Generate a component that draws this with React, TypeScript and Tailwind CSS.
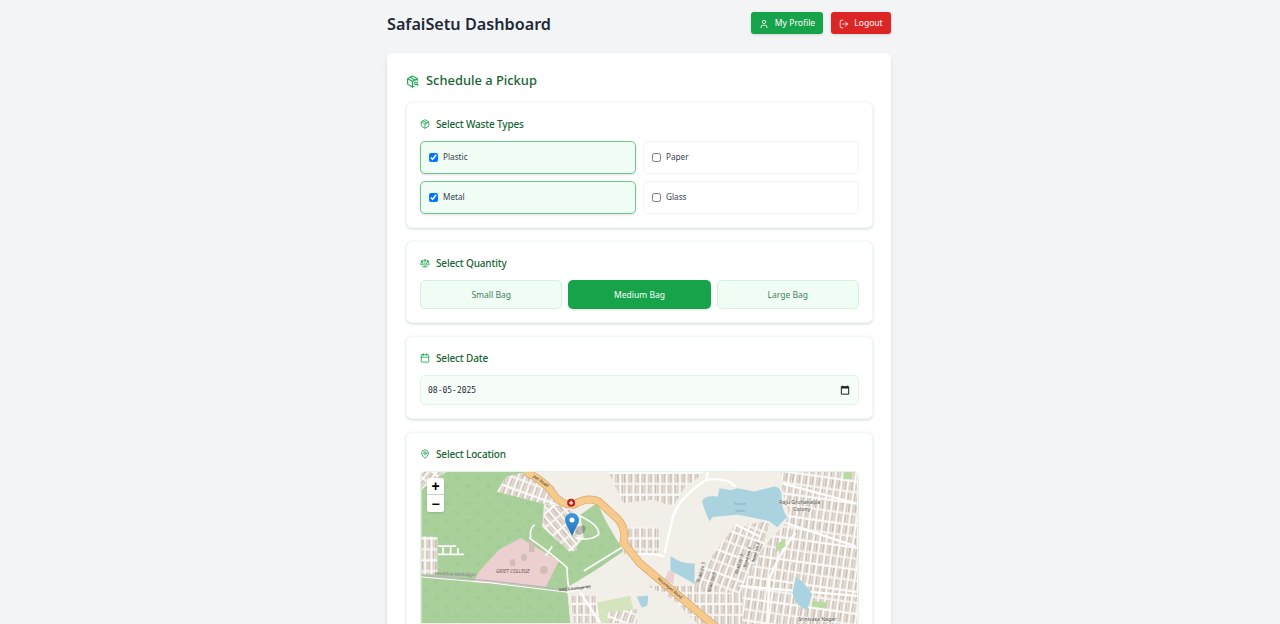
import { Calendar, LogOut, MapPin, Package, PackageSearch, Scale, User } from "lucide-react";

const wasteTypes = [
  { name: "Plastic", checked: true },
  { name: "Paper", checked: false },
  { name: "Metal", checked: true },
  { name: "Glass", checked: false },
];

const bags = [
  { name: "Small Bag", active: false },
  { name: "Medium Bag", active: true },
  { name: "Large Bag", active: false },
];

// one hatch per street direction; white lanes, tan houses
const hatches = [
  { id: "h0", rot: 0 },
  { id: "h8", rot: 8 },
  { id: "h20", rot: 20 },
  { id: "h40", rot: 40 },
  { id: "h-40", rot: -40 },
];

function Hatches() {
  return (
    <defs>
      {hatches.map((h) => (
        <pattern key={h.id} id={h.id} width={20} height={66} patternUnits="userSpaceOnUse" patternTransform={`rotate(${h.rot})`}>
          <rect width={20} height={66} fill="#f4f1ec" />
          <rect x={4} y={3} width={5} height={26} fill="#cbbfb5" />
          <rect x={11} y={3} width={5} height={26} fill="#d6ccc3" />
          <rect x={4} y={36} width={5} height={26} fill="#d6ccc3" />
          <rect x={11} y={36} width={5} height={26} fill="#c6b9ae" />
          <rect x={0} y={0} width={2.5} height={66} fill="#ffffff" />
          <rect x={0} y={31} width={20} height={3.5} fill="#ffffff" />
        </pattern>
      ))}
      <pattern id="trees" width={62} height={52} patternUnits="userSpaceOnUse">
        <path d="M10 14 q-4 -6 -2 -9 M14 16 v-12 M18 14 q4 -6 2 -9" stroke="#98c388" strokeWidth={2} fill="none" />
        <path d="M42 40 q-4 -6 -2 -9 M46 42 v-12 M50 40 q4 -6 2 -9" stroke="#98c388" strokeWidth={2} fill="none" />
      </pattern>
    </defs>
  );
}

const FOREST =
  "M30 118 L100 96 L345 96 L290 115 L258 155 L400 190 L395 262 L480 338 L520 295 L510 225 L560 190 L590 250 L640 335 L560 390 L470 445 L480 552 L30 552 Z";

function MapArt() {
  return (
    <svg viewBox="30 96 1317 900" className="block h-full w-full" fontFamily="'Noto Sans', sans-serif">
      <Hatches />
      <rect x={30} y={96} width={1317} height={900} fill="#f2efe9" />

      <path d={FOREST} fill="#a9d09a" />
      <path d={FOREST} fill="url(#trees)" />
      <path d="M30 96 L105 96 L60 125 L30 150 Z" fill="url(#h40)" />
      <path d="M30 290 L78 292 L78 405 L30 405 Z" fill="url(#h0)" />

      {/* college */}
      <path d="M205 395 L265 330 L330 295 L445 365 L405 445 L270 432 L185 430 Z" fill="#eccfcf" />
      <ellipse cx={305} cy={370} rx={9} ry={11} fill="#d3bdb7" />
      <ellipse cx={340} cy={354} rx={9} ry={11} fill="#d3bdb7" />
      <circle cx={400} cy={392} r={12} fill="#d3bdb7" />
      <rect x={355} y={306} width={16} height={32} fill="#d3bdb7" />
      <text x={255} y={401} fontSize={15} fontStyle="italic" fill="#6b5a55">GRIET COLLEGE</text>

      <path d="M80 320 H135 M95 320 V345 M118 320 V345 M140 325 V345 M80 345 H158" stroke="#ffffff" strokeWidth={5} fill="none" />

      {/* residential blocks around the road */}
      <path d="M285 110 L345 96 L420 130 L470 190 L410 195 L258 155 Z" fill="url(#h20)" />
      <path d="M405 195 L470 200 L505 240 L500 330 L480 338 L395 262 Z" fill="url(#h-40)" />
      <path d="M360 300 Q355 265 372 255 M355 295 Q420 340 470 385 Q470 420 475 445 M425 320 L405 350 M500 225 Q570 255 565 285 Q540 305 495 295 M520 395 L690 290" stroke="#ffffff" strokeWidth={5} fill="none" />

      {/* south side of GRIET Rd */}
      <path d="M470 450 L560 400 L690 330 L720 420 L720 552 L480 552 Z" fill="#f2efe9" />
      <path d="M480 470 L560 470 L565 552 L490 552 Z" fill="url(#h0)" />
      <path d="M560 490 L660 470 L680 552 L570 552 Z" fill="#d4e4bd" />
      <path d="M590 520 L680 510 L680 552 L595 552 Z" fill="url(#h20)" />
      <path d="M30 408 L240 425 L470 452 L540 440" stroke="#bdb2bf" strokeWidth={4} fill="none" />
      <path d="M30 413 L240 431 L470 459 L540 446" stroke="#ffffff" strokeWidth={3} fill="none" />
      <path d="M510 460 L570 552" stroke="#ffffff" strokeWidth={7} fill="none" />
      <text x={70} y={407} fontSize={14} fill="#8d6d95" transform="rotate(2 70 407)">Medchal-Malkajgiri</text>
      <text x={445} y={456} fontSize={12} fill="#333333" transform="rotate(-5 445 456)">GRIET College Rd</text>

      {/* east half, coordinates from x = 690 */}
      <g transform="translate(690 0)">
        <path d="M-95 96 L195 96 L130 150 L100 200 L40 180 L-50 190 Z" fill="url(#h0)" />
        <path d="M-50 262 L60 262 L60 340 L-50 345 Z" fill="url(#h0)" />
        <path d="M425 96 L655 96 L655 620 L300 620 L300 400 L375 320 L440 250 L450 225 L430 150 Z" fill="url(#h8)" />
        <path d="M165 420 L285 260 L390 245 L375 320 L320 420 L300 470 L170 470 Z" fill="url(#h20)" />
        <path d="M25 440 L170 440 L310 470 L310 620 L240 620 L100 480 Z" fill="url(#h0)" />
        <path d="M75 340 Q85 290 100 230 Q120 170 200 120 L205 96 M200 120 Q260 110 290 140 M-20 345 Q30 340 75 350 M290 255 L360 290 M470 280 Q420 340 390 420 L385 552 M300 440 L655 470 M430 130 L650 190 M440 250 L650 320" stroke="#ffffff" strokeWidth={7} fill="none" />
        <path d="M187 185 Q195 165 235 170 L240 145 L275 150 L295 145 L345 155 L405 140 Q430 140 428 180 Q430 215 445 232 Q430 245 415 263 L390 245 Q330 230 290 225 L220 232 L210 245 Q200 225 187 185 Z" fill="#aad3df" />
        <text x={285} y={195} fontSize={12} fill="#7fa3b8">Nizam</text>
        <text x={287} y={218} fontSize={12} fill="#7fa3b8">Talab</text>
        <path d="M92 350 Q125 375 165 372 L165 435 Q125 410 92 395 Z" fill="#aad3df" />
        <path d="M470 415 Q495 425 520 465 L505 512 Q470 505 460 460 Z" fill="#aad3df" />
        <path d="M-10 472 L25 470 L22 500 L5 505 Z" fill="#aad3df" />
        <path d="M85 395 L105 400 L100 435 L75 420 Z" fill="#eccfcf" />
        <path d="M410 315 L438 300 L440 320 L412 338 Z" fill="#b8dca0" />
        <path d="M520 485 L565 490 L560 508 L518 502 Z" fill="#b8dca0" />
        <path d="M615 96 H638 V118 H615 Z" fill="#b8dca0" />
        <text x={420} y={193} fontSize={16} fill="#4a4a4a" stroke="#f2efe9" strokeWidth={2} paintOrder="stroke">Raju Gruhakalpa</text>
        <text x={463} y={213} fontSize={16} fill="#4a4a4a" stroke="#f2efe9" strokeWidth={2} paintOrder="stroke">Colony</text>
        <text x={478} y={546} fontSize={15.5} fill="#4a4a4a" stroke="#f2efe9" strokeWidth={2} paintOrder="stroke">Srinivasa Nagar</text>
        <text x={295} y={405} fontSize={13} fill="#444444" transform="rotate(-75 295 405)">Road No 2</text>
        <text x={320} y={385} fontSize={13} fill="#444444" transform="rotate(-75 320 385)">Road No 3</text>
        <text x={345} y={370} fontSize={13} fill="#444444" transform="rotate(-75 345 370)">Road No 4</text>
        <text x={180} y={430} fontSize={13} fill="#444444" transform="rotate(-75 180 430)">Road No 5</text>
        <text x={212} y={460} fontSize={13} fill="#444444" transform="rotate(-75 212 460)">Road No 6</text>
      </g>

      {/* main road */}
      <path d="M345 96 Q400 120 430 165 Q450 195 490 195 Q530 170 565 185 L620 235 Q650 265 640 310 L690 372 L950 590" stroke="#d9a766" strokeWidth={24} fill="none" />
      <path d="M345 96 Q400 120 430 165 Q450 195 490 195 Q530 170 565 185 L620 235 Q650 265 640 310 L690 372 L950 590" stroke="#f6c98c" strokeWidth={20} fill="none" />
      <text x={366} y={111} fontSize={13} fill="#333333" transform="rotate(35 366 111)">pet Road</text>
      <text x={742} y={420} fontSize={13} fill="#333333" transform="rotate(40 742 420)">Nizampet Road</text>

      {/* hospital dot */}
      <circle cx={482} cy={189} r={12} fill="#c21f1f" />
      <path d="M482 183 V195 M476 189 H488" stroke="#ffffff" strokeWidth={4} />

      {/* marker shadow */}
      <ellipse cx={510} cy={272} rx={18} ry={12} fill="#000000" opacity={0.22} transform="rotate(-35 510 272)" />
    </svg>
  );
}

function SectionTitle({ icon: Icon, children }: { icon: typeof Package; children: string }) {
  return (
    <h3 className="flex items-center gap-[6px] text-[10px] leading-[14px] font-medium tracking-[-0.15px] text-[#166534]">
      <Icon className="h-[10px] w-[10px] text-[#16a34a]" strokeWidth={2} />
      {children}
    </h3>
  );
}

export default function App() {
  return (
    <div className="h-[624px] overflow-hidden bg-[#f3f4f6] font-['Noto_Sans',sans-serif]">
      <div className="mx-auto w-[504px] -translate-x-px pt-3">
        <header className="flex h-[22px] items-center justify-between">
          <h1 className="pt-[2px] text-[16.2px] font-semibold text-[#1f2937]">SafaiSetu Dashboard</h1>
          <div className="flex gap-2">
            <button className="flex h-[22px] w-[72px] items-center justify-center gap-[6px] rounded-[3px] bg-[#16a34a] pt-px text-[8.6px] text-white shadow-sm">
              <User className="h-[10px] w-[10px]" />
              My Profile
            </button>
            <button className="flex h-[22px] w-[60px] items-center justify-center gap-[5px] rounded-[3px] bg-[#dc2626] pt-px text-[8.5px] text-white shadow-sm">
              <LogOut className="h-[10px] w-[10px]" />
              Logout
            </button>
          </div>
        </header>

        <main className="mt-[19px] rounded-md bg-white px-[19px] pt-[18px] shadow-md">
          <h2 className="flex h-[20px] items-center gap-[7px] text-[12.9px] font-medium text-[#166534]">
            <PackageSearch className="h-[13px] w-[13px] text-[#16a34a]" />
            Schedule a Pickup
          </h2>

          <div className="mt-[11px] flex w-[467px] flex-col gap-[13px]">
            <section className="h-[126px] rounded-md border border-[#ecfdf3] bg-white px-[13px] pt-[14px] shadow-[0_1px_3px_rgba(0,0,0,0.16)]">
              <SectionTitle icon={Package}>Select Waste Types</SectionTitle>
              <div className="mt-[10px] grid grid-cols-2 gap-x-[7px] gap-y-[7px]">
                {wasteTypes.map((w) => (
                  <label
                    key={w.name}
                    className={
                      w.checked
                        ? "flex h-[33px] items-center gap-[5px] rounded-[5px] border border-[#6fc48f] bg-[#f0fdf4] pl-2 text-[8.2px] text-[#374151] shadow-sm"
                        : "flex h-[33px] items-center gap-[5px] rounded-[5px] border border-[#f0f4f2] bg-white pl-2 text-[8.2px] text-[#374151]"
                    }
                  >
                    <input type="checkbox" defaultChecked={w.checked} className="m-0 h-[9px] w-[9px]" />
                    {w.name}
                  </label>
                ))}
              </div>
            </section>

            <section className="h-[82px] rounded-md border border-[#ecfdf3] bg-white px-[13px] pt-[14px] shadow-[0_1px_3px_rgba(0,0,0,0.16)]">
              <SectionTitle icon={Scale}>Select Quantity</SectionTitle>
              <div className="mt-[10px] grid grid-cols-3 gap-[6px]">
                {bags.map((b) => (
                  <button
                    key={b.name}
                    className={
                      b.active
                        ? "h-[29px] rounded-[5px] bg-[#16a34a] pt-px text-[8.5px] text-white shadow-sm"
                        : "h-[29px] rounded-[5px] border border-[#d1f2dd] bg-[#f0fdf4] pt-px text-[8.5px] text-[#3f7f5c]"
                    }
                  >
                    {b.name}
                  </button>
                ))}
              </div>
            </section>

            <section className="h-[83px] rounded-md border border-[#ecfdf3] bg-white px-[13px] pt-[14px] shadow-[0_1px_3px_rgba(0,0,0,0.16)]">
              <SectionTitle icon={Calendar}>Select Date</SectionTitle>
              <div className="mt-[10px] flex h-[30px] items-center justify-between rounded-[5px] border border-[#dcf5e5] bg-[#f7fdf9] pr-[8px] pl-[7px]">
                <span className="pt-[2px] font-['DejaVu_Sans_Mono',monospace] text-[8px] text-[#1f2937]">08-05-2025</span>
                <svg viewBox="0 0 12 12" className="h-[10px] w-[10px]">
                  <path d="M3 .8V2.2M9 .8V2.2M1.6 2H10.4V11H1.6Z" fill="none" stroke="#222222" strokeWidth="1.2" />
                  <rect x="1.6" y="2" width="8.8" height="2.2" fill="#222222" />
                </svg>
              </div>
            </section>

            <section className="h-[300px] rounded-md border border-[#ecfdf3] bg-white px-[13px] pt-[14px] shadow-[0_1px_3px_rgba(0,0,0,0.16)]">
              <SectionTitle icon={MapPin}>Select Location</SectionTitle>
              <div className="relative mt-[10px] h-[300px] overflow-hidden rounded-[5px] border border-[#dcf5e5]">
                <MapArt />
                <div className="absolute top-[6px] left-[6px] flex w-[17px] flex-col rounded-[2px] bg-white text-black shadow">
                  <span className="flex h-[17px] items-center justify-center border-b border-[#cccccc] font-['Liberation_Sans',sans-serif] text-[14px] leading-none font-bold">+</span>
                  <span className="flex h-[17px] items-center justify-center font-['Liberation_Sans',sans-serif] text-[14px] leading-none font-bold">−</span>
                </div>
                <svg viewBox="0 0 25 41" className="absolute top-[41px] left-[144px] h-[23px] w-[14px]">
                  <defs>
                    <linearGradient id="pin" x1="0" y1="0" x2="0" y2="1">
                      <stop offset="0" stopColor="#3f9ad8" />
                      <stop offset="1" stopColor="#2470b8" />
                    </linearGradient>
                  </defs>
                  <path d="M12.5 0C5.6 0 0 5.6 0 12.5c0 2.4.7 4.7 1.9 6.6L12.5 41l10.6-21.9c1.2-1.9 1.9-4.2 1.9-6.6C25 5.6 19.4 0 12.5 0Z" fill="url(#pin)" />
                  <circle cx="12.5" cy="12.5" r="4.5" fill="#ffffff" />
                </svg>
              </div>
            </section>
          </div>
        </main>
      </div>
    </div>
  );
}
